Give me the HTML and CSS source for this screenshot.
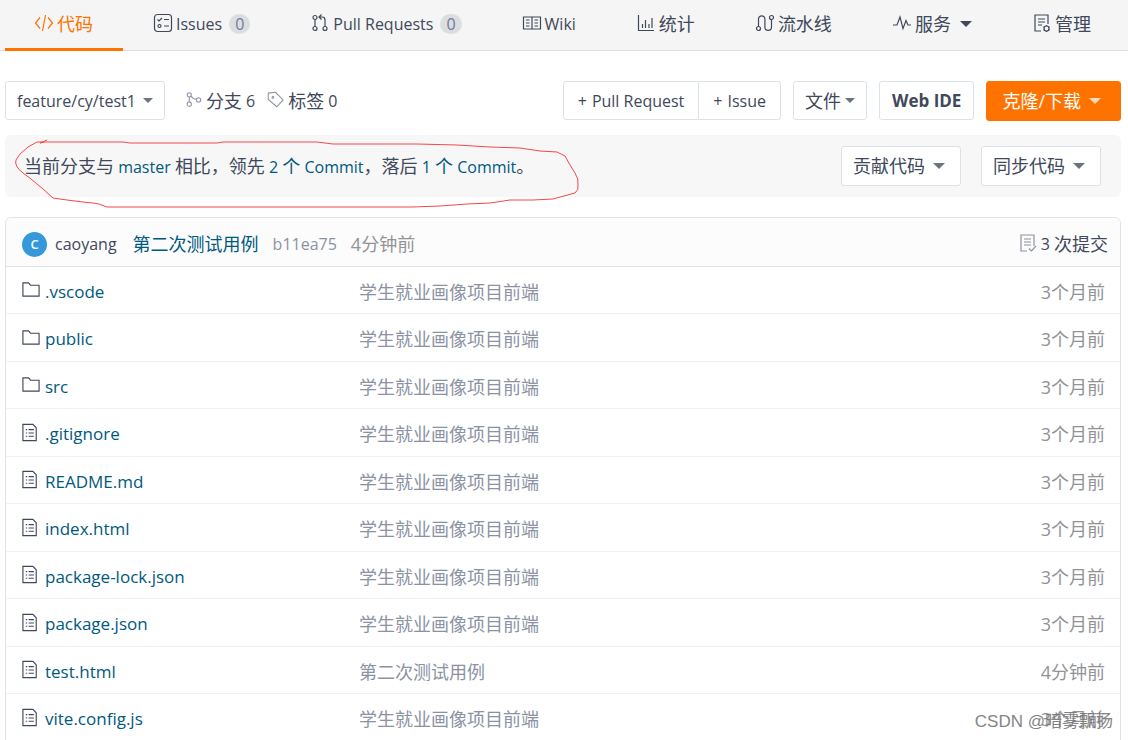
FILE: index.html
```html
<!DOCTYPE html>
<html lang="zh-CN">
<head>
<meta charset="utf-8">
<title>feature/cy/test1</title>
<link rel="stylesheet" href="styles.css">
</head>
<body>
<svg class="sprite" aria-hidden="true">
  <symbol id="i-code" viewBox="0 0 20 20"><path d="M6 4.500 1.500 10 6 15.500M14 4.500 18.500 10 14 15.500M11.500 2 8.500 18"/></symbol>
  <symbol id="i-issues" viewBox="0 0 20 20"><rect x="1.500" y="1.500" width="17" height="17" rx="3"/><path d="m4.500 6.500 1.500 1.500 3-3M11 6.500h5M11 13h5"/><circle cx="6.500" cy="13" r="1.500"/></symbol>
  <symbol id="i-pr" viewBox="0 0 20 20"><circle cx="5" cy="4.500" r="2"/><circle cx="5" cy="15.500" r="2"/><circle cx="15" cy="15.500" r="2"/><path d="M5 6.500v7M15 13.500V7q0-3-3-3H9.500M11.500 1.500 9 4l2.500 2.500"/></symbol>
  <symbol id="i-wiki" viewBox="0 0 20 20"><path d="M1.500 4h17v12h-17zM10 4v12M4 7h3.500M4 10h3.500M4 13h3.500M12.500 7H16M12.500 10H16M12.500 13H16"/></symbol>
  <symbol id="i-stats" viewBox="0 0 20 20"><path d="M2.500 2v15.500h15.500M6.500 15v-4M9.500 15V7M13 15v-4M16 15V5"/></symbol>
  <symbol id="i-flow" viewBox="0 0 20 20"><circle cx="3.500" cy="15.500" r="2"/><circle cx="16.500" cy="4.500" r="2"/><path d="M3.500 13.500V6a3.200 3.200 0 0 1 6.400 0v8a3.200 3.200 0 0 0 6.600 0V6.500"/></symbol>
  <symbol id="i-pulse" viewBox="0 0 20 20"><path d="M1 12h4L8 4l3 11.500 3-8 2 4.500h3"/></symbol>
  <symbol id="i-manage" viewBox="0 0 20 20"><path d="M9 18H3V2h13v9M6 6h7M6 9h7M6 12h4"/><circle cx="14.500" cy="15.500" r="2.500"/><path d="M14.500 12v1M14.500 18v1M11.500 13.700l1 .6M16.700 16.700l1 .6M17.500 13.700l-1 .6M12.500 16.700l-1 .6"/></symbol>
  <symbol id="i-branch" viewBox="0 0 20 20"><circle cx="5" cy="4.500" r="2.500"/><circle cx="5" cy="15.500" r="2.500"/><circle cx="16" cy="10.500" r="2.500"/><path d="M5 7v6M7 6q2 3.500 6.500 4"/></symbol>
  <symbol id="i-tag" viewBox="0 0 20 20"><path d="M1.500 2.500 10 1.500l9 9-7.500 8L1.500 10z"/><circle cx="7" cy="7.500" r="1"/></symbol>
  <symbol id="i-commits" viewBox="0 0 20 20"><path d="M9 18H3V2h13v11M6 6h7M6 9h7M6 12h7M11 15.500l2.500 2.500 4.500-5"/></symbol>
  <symbol id="i-folder" viewBox="0 0 20 20"><path d="M1.500 17V3h6l2 2.500h9V17z"/></symbol>
  <symbol id="i-file" viewBox="0 0 20 20"><path d="M1.500 1.500H12l3.500 3.500v13.500h-14zM4.500 7H6M4.500 10.500H6M4.500 14H6M7.500 7h5.500M7.500 10.500h5.500M7.500 14h5.500"/></symbol>
</svg>

<nav class="tabs">
  <a class="tab active" href="#"><svg class="icon"><use href="#i-code"/></svg><span class="zh">代码</span></a>
  <a class="tab" href="#"><svg class="icon"><use href="#i-issues"/></svg>Issues<span class="badge">0</span></a>
  <a class="tab" href="#"><svg class="icon"><use href="#i-pr"/></svg>Pull Requests<span class="badge">0</span></a>
  <a class="tab" href="#"><svg class="icon"><use href="#i-wiki"/></svg>Wiki</a>
  <a class="tab" href="#"><svg class="icon"><use href="#i-stats"/></svg><span class="zh">统计</span></a>
  <a class="tab" href="#"><svg class="icon"><use href="#i-flow"/></svg><span class="zh">流水线</span></a>
  <a class="tab" href="#"><svg class="icon"><use href="#i-pulse"/></svg><span class="zh">服务</span><span class="caret wide"></span></a>
  <a class="tab" href="#"><svg class="icon"><use href="#i-manage"/></svg><span class="zh">管理</span></a>
</nav>

<main class="page">
  <div class="toolbar">
    <button class="btn branch" type="button">feature/cy/test1<span class="caret"></span></button>
    <div class="refs">
      <a class="ref" href="#"><svg class="icon"><use href="#i-branch"/></svg><span class="zh">分支</span>&nbsp;6</a>
      <a class="ref" href="#"><svg class="icon"><use href="#i-tag"/></svg><span class="zh">标签</span>&nbsp;0</a>
    </div>
    <div class="actions">
      <div class="group">
        <button class="btn" type="button"><span class="plus">+</span>Pull Request</button>
        <button class="btn" type="button"><span class="plus">+</span>Issue</button>
      </div>
      <button class="btn" type="button"><span class="zh">文件</span><span class="caret"></span></button>
      <button class="btn strong" type="button">Web IDE</button>
      <button class="btn primary" type="button"><span class="zh">克隆/下载</span><span class="caret wide"></span></button>
    </div>
  </div>

  <section class="compare">
    <p class="summary"><span class="zh">当前分支与</span> <a href="#">master</a> <span class="zh">相比，领先</span> <a href="#">2 <span class="zh">个</span> Commit</a><span class="zh">，落后</span> <a href="#">1 <span class="zh">个</span> Commit</a><span class="zh">。</span></p>
    <button class="btn menu" type="button"><span class="zh">贡献代码</span><span class="caret wide"></span></button>
    <button class="btn menu" type="button"><span class="zh">同步代码</span><span class="caret wide"></span></button>
    <svg class="scribble" viewBox="0 0 566 72" aria-hidden="true"><path d="M32 -1 25 2 30 1H108L115 2H202L208 1H302L318 3H402L442 4 475 6 505 7 525 10 542 11 550 15 555 24 560 32Q564 38 563 44 564 49 560 52L549 55 538 58 518 59H495L475 62 452 63 425 65 398 66H92L84 63 78 62 68 61 52 59 38 57 28 48 16 38 8 32Q-1 25 1 19L5 13 13 6 22 1H28"/></svg>
  </section>

  <section class="files">
    <header class="commit">
      <span class="avatar">C</span>
      <a class="author" href="#">caoyang</a>
      <a class="message zh" href="#">第二次测试用例</a>
      <a class="hash" href="#">b11ea75</a>
      <span class="when"><span class="zh">4分钟前</span></span>
      <a class="count" href="#"><svg class="icon"><use href="#i-commits"/></svg>3&nbsp;<span class="zh">次提交</span></a>
    </header>
    <table class="tree">
      <tbody>
        <tr><td class="name"><a href="#"><svg class="icon"><use href="#i-folder"/></svg>.vscode</a></td><td class="msg zh">学生就业画像项目前端</td><td class="age zh">3个月前</td></tr>
        <tr><td class="name"><a href="#"><svg class="icon"><use href="#i-folder"/></svg>public</a></td><td class="msg zh">学生就业画像项目前端</td><td class="age zh">3个月前</td></tr>
        <tr><td class="name"><a href="#"><svg class="icon"><use href="#i-folder"/></svg>src</a></td><td class="msg zh">学生就业画像项目前端</td><td class="age zh">3个月前</td></tr>
        <tr><td class="name"><a href="#"><svg class="icon"><use href="#i-file"/></svg>.gitignore</a></td><td class="msg zh">学生就业画像项目前端</td><td class="age zh">3个月前</td></tr>
        <tr><td class="name"><a href="#"><svg class="icon"><use href="#i-file"/></svg>README.md</a></td><td class="msg zh">学生就业画像项目前端</td><td class="age zh">3个月前</td></tr>
        <tr><td class="name"><a href="#"><svg class="icon"><use href="#i-file"/></svg>index.html</a></td><td class="msg zh">学生就业画像项目前端</td><td class="age zh">3个月前</td></tr>
        <tr><td class="name"><a href="#"><svg class="icon"><use href="#i-file"/></svg>package-lock.json</a></td><td class="msg zh">学生就业画像项目前端</td><td class="age zh">3个月前</td></tr>
        <tr><td class="name"><a href="#"><svg class="icon"><use href="#i-file"/></svg>package.json</a></td><td class="msg zh">学生就业画像项目前端</td><td class="age zh">3个月前</td></tr>
        <tr><td class="name"><a href="#"><svg class="icon"><use href="#i-file"/></svg>test.html</a></td><td class="msg zh">第二次测试用例</td><td class="age zh">4分钟前</td></tr>
        <tr><td class="name"><a href="#"><svg class="icon"><use href="#i-file"/></svg>vite.config.js</a></td><td class="msg zh">学生就业画像项目前端</td><td class="age zh">3个月前</td></tr>
      </tbody>
    </table>
  </section>
</main>
<div class="watermark">CSDN @暗雾飘扬</div>
</body>
</html>
```

FILE: styles.css
```css
* { box-sizing: border-box; }
html { scrollbar-width: none; }
body {
  margin: 0;
  background: #fff;
  color: #40485b;
  font: 16px/24px "Open Sans", "Noto Sans CJK SC", sans-serif;
}
a { color: inherit; text-decoration: none; }
.zh { font-size: 18px; line-height: 24px; }
.sprite { position: absolute; width: 0; height: 0; }
.icon {
  flex: none;
  width: 20px;
  height: 20px;
  fill: none;
  stroke: currentColor;
  stroke-width: 1.2;
}
.caret {
  flex: none;
  border: 5px solid transparent;
  border-top-color: #6b7380;
  border-bottom: 0;
}
.caret.wide { border-width: 6px 6px 0; }

.tabs {
  display: flex;
  justify-content: space-between;
  height: 51px;
  padding: 0 7px 0 5px;
  background: #f5f5f5;
  border-bottom: 1px solid #dcdddf;
}
.tab {
  display: flex;
  align-items: center;
  gap: 3px;
  height: 51px;
  padding: 0 30px 1px;
  border-bottom: 3px solid transparent;
  white-space: nowrap;
}
.tab.active { padding-left: 29px; color: #fe7300; border-bottom-color: #fe7300; }
.tab .icon { margin-bottom: 2px; }
.tab .caret { margin-left: 6px; border-top-color: #40485b; }
.badge {
  margin-left: 4px;
  padding: 0 6px;
  border-radius: 10px;
  background: #dcddde;
  color: #6e7b9b;
  font-size: 16px;
  line-height: 20px;
}

.page { padding: 30px 7px 0 5px; }
.toolbar { display: flex; align-items: flex-start; height: 54px; }
.btn {
  display: flex;
  align-items: center;
  justify-content: center;
  height: 39px;
  padding: 0 11px;
  border: 1px solid #dce3e8;
  border-radius: 3px;
  background: #fff;
  color: #40485b;
  font: inherit;
  white-space: nowrap;
}
.btn .caret { margin-left: 4px; }
.btn .caret.wide { margin-left: 8px; }
.btn.branch .caret { margin-left: 7px; }
.plus { margin-right: 5px; }
.refs { display: flex; gap: 12px; margin-left: 20px; height: 39px; }
.ref { display: flex; align-items: center; }
.ref .icon { width: 17px; height: 17px; color: #8c92a4; margin: 0 4px 2px 0; }
.actions { display: flex; gap: 12px; margin-left: auto; }
.group { display: flex; }
.group .btn { padding: 0 14px; }
.group .btn:first-child { border-radius: 3px 0 0 3px; }
.group .btn:last-child { border-left: 0; border-radius: 0 3px 3px 0; }
.strong { padding: 0 12px; font-size: 17px; font-weight: 700; }
.primary { height: 40px; padding: 0 19px 0 15px; background: #fe7300; border-color: #fe7300; color: #fff; }
.primary .caret { border-top-color: #ffdcc0; }

.compare {
  position: relative;
  display: flex;
  align-items: center;
  gap: 20px;
  height: 62px;
  padding: 0 20px 0 19px;
  background: #f7f7f7;
  border-radius: 6px;
}
.summary { margin: 0 auto 0 0; color: #40485b; white-space: nowrap; }
.summary a { color: #005980; }
.menu { justify-content: flex-start; width: 120px; height: 40px; }
.scribble {
  position: absolute;
  left: 10px;
  top: 6px;
  width: 566px;
  height: 72px;
  overflow: visible;
  fill: none;
  stroke: #f6474b;
  stroke-width: 1;
}

.files {
  margin-top: 20px;
  border: 1px solid #dfe4ea;
  border-radius: 6px 6px 0 0;
}
.commit {
  display: flex;
  align-items: center;
  height: 49px;
  padding: 4px 12px 0 16px;
  background: #fcfcfc;
  border-bottom: 1px solid #dce3e8;
  border-radius: 6px 6px 0 0;
}
.avatar {
  width: 25px;
  height: 25px;
  margin-right: 8px;
  border-radius: 50%;
  background: #3598db;
  color: #fff;
  font-size: 13px;
  font-weight: 600;
  line-height: 25px;
  text-align: center;
}
.author { margin-right: 16px; }
.message { margin-right: 14px; color: #005980; }
.hash { margin-right: 14px; color: #8c92a4; }
.when { color: #919397; }
.count { display: flex; align-items: center; margin-left: auto; }
.count .icon { color: #8c92a4; margin: 0 3px 2px 0; }

.tree { width: 100%; border-spacing: 0; table-layout: fixed; }
.tree tr { height: 47px; }
.tree tr:nth-child(even) { height: 48px; }
.tree td { padding: 3px 0 0; border-bottom: 1px solid #eff2f5; }
.tree .name { width: 353px; font-size: 17px; }
.name a { display: flex; align-items: center; gap: 4px; padding-left: 15px; color: #005980; }
.name .icon { color: #40485b; width: 20px; height: 19px; margin-bottom: 4px; }
.msg { color: #8c92a4; }
.tree .age { width: 120px; padding-right: 15px; color: #919397; text-align: right; }

.watermark {
  position: absolute;
  right: 15px;
  top: 709px;
  color: #777;
  font: 17px/26px "Liberation Sans", "Noto Sans CJK SC", sans-serif;
  opacity: 0.9;
}
```
